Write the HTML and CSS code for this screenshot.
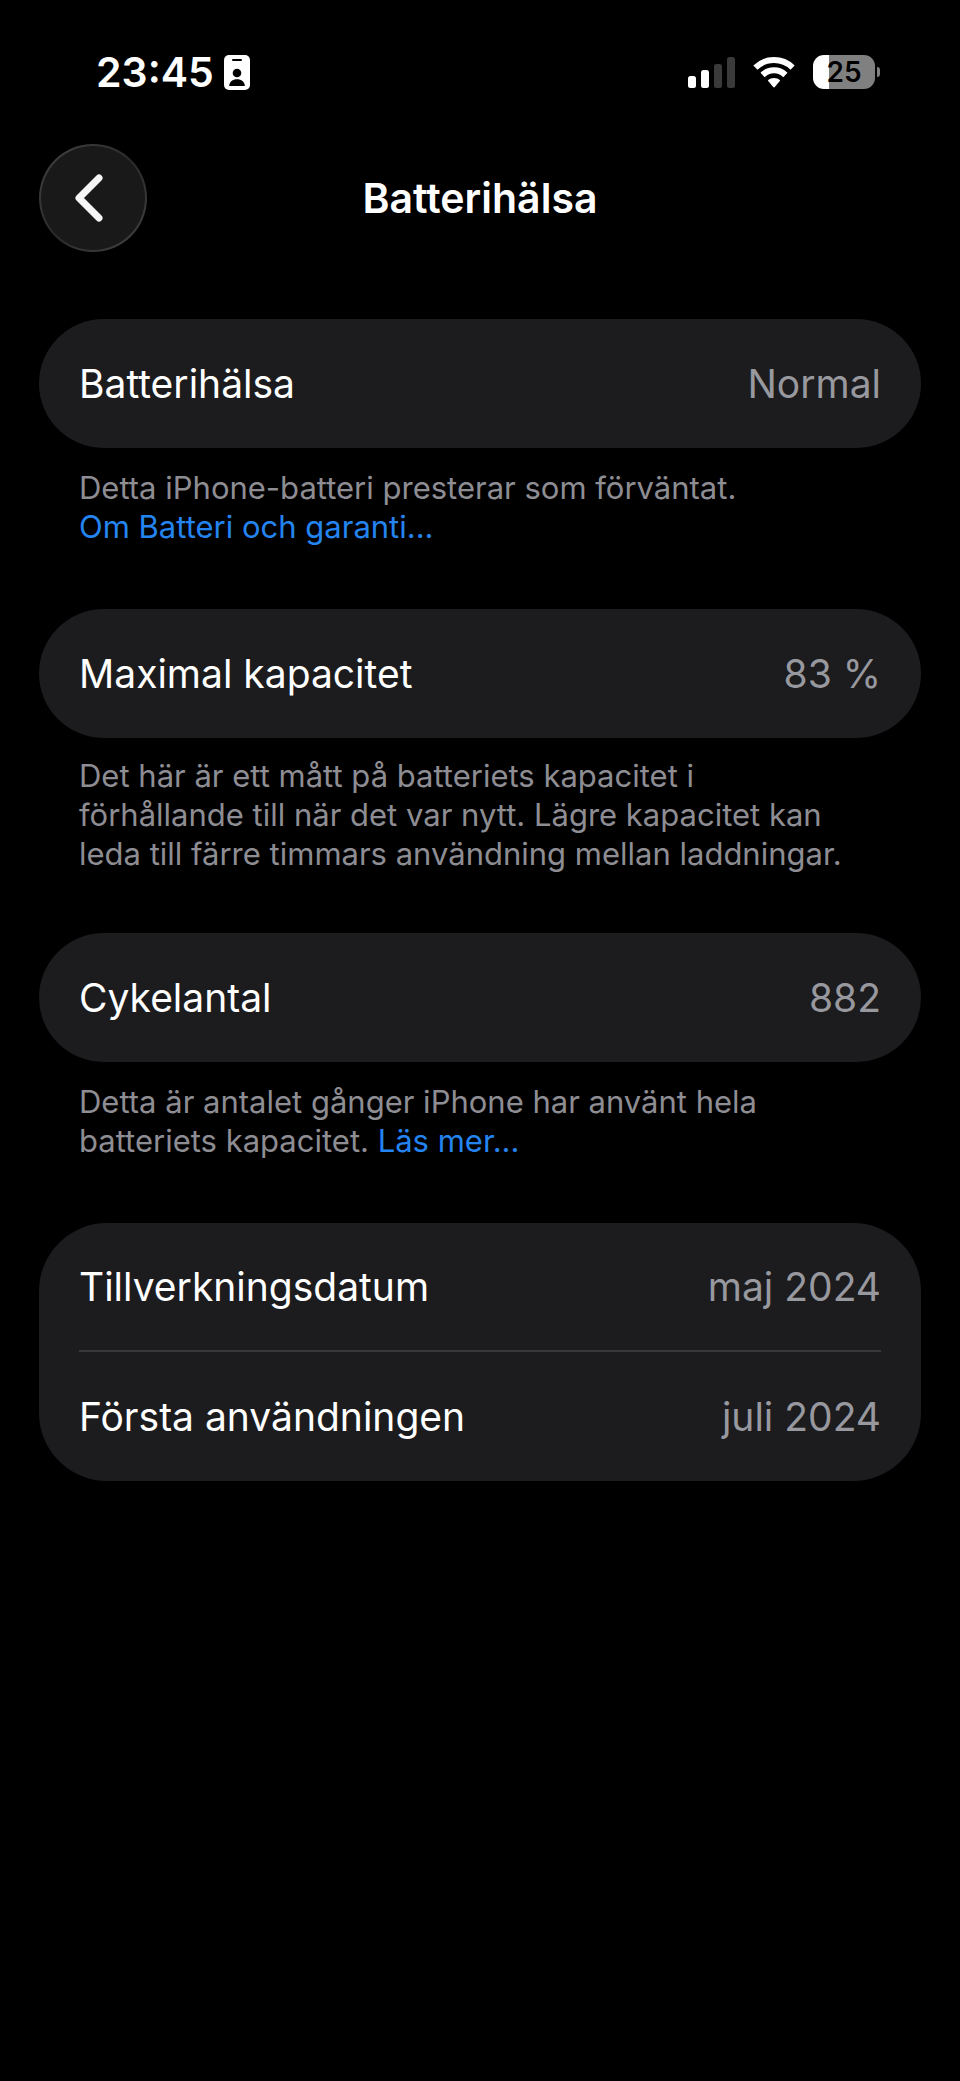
FILE: index.html
```html
<!DOCTYPE html>
<html lang="sv">
<head>
    <meta charset="UTF-8">
    <meta name="viewport" content="width=device-width, initial-scale=1.0">
    <title>Batterihälsa</title>
    <link rel="stylesheet" href="styles.css">
</head>
<body>
    <div class="status-bar">
        <div class="status-left">
            <span class="time">23:45</span>
            <svg class="id-icon" width="26" height="35" viewBox="0 0 26 35" aria-hidden="true">
                <rect width="26" height="35" rx="5" fill="#fff"/>
                <rect x="8" y="4" width="10" height="2" rx="1" fill="#000"/>
                <circle cx="13" cy="18" r="4.3" fill="#000"/>
                <path d="M5.2 31c0-4.3 3.5-6.8 7.8-6.8s7.8 2.5 7.8 6.8z" fill="#000"/>
            </svg>
        </div>
        <div class="status-right">
            <svg width="47" height="31" viewBox="0 0 47 31" aria-hidden="true">
                <rect x="0" y="19" width="8" height="12" rx="2.5" fill="#fff"/>
                <rect x="13" y="13" width="8" height="18" rx="2.5" fill="#fff"/>
                <rect x="26" y="7" width="8" height="24" rx="2.5" fill="#3a3a3a"/>
                <rect x="39" y="0" width="8" height="31" rx="2.5" fill="#3a3a3a"/>
            </svg>
            <svg class="wifi" width="42" height="31" viewBox="0 0 42 31" aria-hidden="true">
                <g fill="none" stroke="#fff" stroke-width="6">
                    <path d="M2.4 10.6C12.8 .6 29.2 .6 39.6 10.6"/>
                    <path d="M9.6 18C16 11.8 26 11.8 32.4 18"/>
                </g>
                <path d="M14.8 23.4C18.4 20.2 23.6 20.2 27.2 23.4L21.8 30Q21 30.8 20.2 30z" fill="#fff"/>
            </svg>
            <div class="battery">
                <span class="battery-level">25</span>
                <span class="battery-tip"></span>
            </div>
        </div>
    </div>

    <header class="nav">
        <button class="back" type="button" aria-label="Tillbaka">
            <svg width="30" height="48" viewBox="0 0 30 48" aria-hidden="true">
                <path d="M25 4L5 24L25 44" fill="none" stroke="#f5f5f5" stroke-width="7" stroke-linecap="round" stroke-linejoin="round"/>
            </svg>
        </button>
        <h1>Batterihälsa</h1>
    </header>

    <main>
        <section>
            <dl class="card">
                <div class="row"><dt>Batterihälsa</dt><dd>Normal</dd></div>
            </dl>
            <p class="note note-link">Detta iPhone-batteri presterar som förväntat.<br><a href="#">Om Batteri och garanti...</a></p>
        </section>

        <section>
            <dl class="card">
                <div class="row"><dt>Maximal kapacitet</dt><dd>83 %</dd></div>
            </dl>
            <p class="note">Det här är ett mått på batteriets kapacitet i<br>förhållande till när det var nytt. Lägre kapacitet kan<br>leda till färre timmars användning mellan laddningar.</p>
        </section>

        <section>
            <dl class="card">
                <div class="row"><dt>Cykelantal</dt><dd>882</dd></div>
            </dl>
            <p class="note note-link">Detta är antalet gånger iPhone har använt hela<br>batteriets kapacitet. <a href="#">Läs mer...</a></p>
        </section>

        <section>
            <dl class="card">
                <div class="row"><dt>Tillverkningsdatum</dt><dd>maj 2024</dd></div>
                <div class="row"><dt>Första användningen</dt><dd>juli 2024</dd></div>
            </dl>
        </section>
    </main>
</body>
</html>
```
FILE: styles.css
```css
* {
    box-sizing: border-box;
}
body {
    margin: 0;
    min-height: 100vh;
    background: #000;
    color: #fff;
    font-family: Inter, Roboto, sans-serif;
    font-size: 39px;
}
.status-bar {
    display: flex;
    justify-content: space-between;
    align-items: center;
    height: 144px;
    padding: 0 80px 0 96px;
}
.status-left, .status-right {
    display: flex;
    align-items: center;
}
.status-left {
    gap: 10px;
}
.status-right {
    gap: 18px;
}
.time {
    font-size: 41px;
    font-weight: 600;
}
.battery {
    display: flex;
    align-items: center;
    gap: 2px;
}
.battery-level {
    width: 62px;
    height: 34px;
    border-radius: 11px;
    background: linear-gradient(to right, #fff 16px, #808080 16px);
    color: #000;
    font-size: 28px;
    font-weight: 600;
    line-height: 34px;
    text-align: center;
}
.battery-tip {
    width: 3px;
    height: 10px;
    border-radius: 0 3px 3px 0;
    background: #808080;
}
.nav {
    display: grid;
    grid-template-columns: 108px 1fr 108px;
    align-items: center;
    padding: 0 39px;
    margin-bottom: 67px;
}
.nav h1 {
    margin: 0;
    font-size: 41px;
    font-weight: 600;
    text-align: center;
}
.back {
    display: flex;
    align-items: center;
    justify-content: center;
    width: 108px;
    height: 108px;
    padding: 0 8px 0 0;
    border: 2px solid transparent;
    border-radius: 50%;
    background: linear-gradient(#191919, #191919) padding-box,
        linear-gradient(135deg, #444, #2a2a2a 50%, #444) border-box;
    cursor: pointer;
}
main {
    padding: 0 39px;
}
.card {
    margin: 0;
    padding: 0 40px;
    border-radius: 68px;
    background: #1c1c1e;
}
.row {
    display: flex;
    justify-content: space-between;
    align-items: center;
    height: 129px;
}
.row:not(:last-child) {
    border-bottom: 2px solid #38383a;
}
.row dd {
    margin: 0;
    color: #98989f;
}
.note {
    margin: 0;
    padding: 18px 40px 60px;
    color: #8d8d93;
    font-size: 31px;
    line-height: 39px;
}
.note-link {
    padding: 20px 40px 63px;
}
.note a {
    color: #2484f0;
    text-decoration: none;
}
```
